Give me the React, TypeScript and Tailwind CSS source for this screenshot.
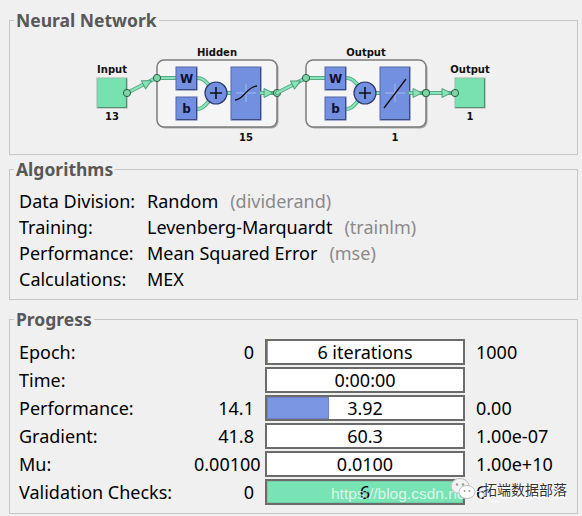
import React from "react";

function Wire({ d }: { d: string }) {
  return (
    <g>
      <path d={d} fill="none" stroke="#5aa884" strokeWidth={4} strokeLinecap="round" />
      <path d={d} fill="none" stroke="#86e4b8" strokeWidth={2.2} strokeLinecap="round" />
    </g>
  );
}

function Dot({ x, y }: { x: number; y: number }) {
  return <circle cx={x} cy={y} r={3.6} fill="#7dd6a8" stroke="#2f5c45" strokeWidth={1} />;
}

function Head({ x, y, a }: { x: number; y: number; a: number }) {
  return (
    <polygon
      points="0,0 -9,-4.5 -9,4.5"
      transform={`translate(${x} ${y}) rotate(${a})`}
      fill="#86e4b8"
      stroke="#4e9c78"
      strokeWidth={1}
      strokeLinejoin="round"
    />
  );
}

function BlueBox({ x, y, w, h }: { x: number; y: number; w: number; h: number }) {
  return (
    <g>
      <rect x={x} y={y} width={w} height={h} fill="#7390e0" stroke="#5467a8" strokeWidth={1} />
      <path d={`M ${x + 1} ${y + h - 0.5} L ${x + w - 0.5} ${y + h - 0.5} L ${x + w - 0.5} ${y + 1}`} fill="none" stroke="#3b4a80" strokeWidth={1} />
    </g>
  );
}

const svgText = "font-['DejaVu_Sans',sans-serif] font-bold text-[10px] fill-[#111]";

function Layer({ x0, label, count, kind }: { x0: number; label: string; count: string; kind: "sig" | "lin" }) {
  return (
    <g>
      <text x={x0 + 60} y={56} textAnchor="middle" className={svgText}>
        {label}
      </text>
      <rect x={x0 + 1.5} y={61.5} width={120} height={67} rx={7} fill="#a9a9a9" />
      <rect x={x0} y={60} width={120} height={67} rx={7} fill="#f5f5f5" stroke="#7c7c7c" strokeWidth={1.5} />
      <Wire d={`M ${x0} 78 L ${x0 + 19} 78`} />
      <Wire d={`M ${x0 + 40} 78 C ${x0 + 46} 78 ${x0 + 48} 81 ${x0 + 53} 86`} />
      <Wire d={`M ${x0 + 40} 109 C ${x0 + 46} 109 ${x0 + 48} 105 ${x0 + 53} 100`} />
      <Wire d={`M ${x0 + 69} 93 L ${x0 + 75} 93`} />
      <BlueBox x={x0 + 19} y={67} w={21} h={23} />
      <text x={x0 + 29.5} y={83} textAnchor="middle" className="font-['DejaVu_Sans',sans-serif] font-bold text-[12px] fill-[#101030]">
        W
      </text>
      <BlueBox x={x0 + 19} y={97} w={21} h={23} />
      <text x={x0 + 29.5} y={113} textAnchor="middle" className="font-['DejaVu_Sans',sans-serif] font-bold text-[12px] fill-[#101030]">
        b
      </text>
      <circle cx={x0 + 59} cy={93} r={11} fill="#7390e0" stroke="#2c3868" strokeWidth={1.2} />
      <path d={`M ${x0 + 53} 93 L ${x0 + 65} 93 M ${x0 + 59} 87 L ${x0 + 59} 99`} stroke="#111" strokeWidth={1.6} />
      <BlueBox x={x0 + 74} y={67} w={30} h={53} />
      <path d={`M ${x0 + 89} 84 L ${x0 + 89} 102 M ${x0 + 79} 93 L ${x0 + 99} 93`} stroke="#a9bcf2" strokeWidth={1} />
      {kind === "sig" ? (
        <path d={`M ${x0 + 78} 100 C ${x0 + 87} 100 ${x0 + 90} 86 ${x0 + 100} 86`} fill="none" stroke="#111" strokeWidth={1.3} />
      ) : (
        <path d={`M ${x0 + 78} 108 L ${x0 + 100} 79`} fill="none" stroke="#111" strokeWidth={1.3} />
      )}
      <Wire d={`M ${x0 + 104} 93 L ${x0 + 118} 93`} />
      <Head x={x0 + 116} y={93} a={0} />
      <Dot x={x0} y={78} />
      <Dot x={x0 + 120} y={93} />
      <text x={x0 + 89} y={141} textAnchor="middle" className={svgText}>
        {count}
      </text>
    </g>
  );
}

function Square({ x, label, count }: { x: number; label: string; count: string }) {
  return (
    <g>
      <text x={x + 15} y={73} textAnchor="middle" className={svgText}>
        {label}
      </text>
      <rect x={x} y={78} width={30} height={30} fill="#77e2b0" stroke="#9ab8aa" strokeWidth={1} />
      <path d={`M ${x + 0.5} 107.5 L ${x + 29.5} 107.5 L ${x + 29.5} 78.5`} fill="none" stroke="#5f8a76" strokeWidth={1.2} />
      <text x={x + 15} y={120} textAnchor="middle" className={svgText}>
        {count}
      </text>
    </g>
  );
}

function Diagram() {
  return (
    <svg className="block ml-[80px] mt-[10px]" width={400} height={105} viewBox="90 40 400 105">
      <Square x={97} label="Input" count="13" />
      <Wire d="M 127 93 L 156 78" />
      <Head x={151.5} y={80.8} a={-26.6} />
      <Dot x={127} y={93} />
      <Layer x0={157} label="Hidden" count="15" kind="sig" />
      <Wire d="M 277 93 L 306 78" />
      <Head x={300.5} y={80.9} a={-27.3} />
      <Layer x0={306} label="Output" count="1" kind="lin" />
      <Wire d="M 426 93 L 455 93" />
      <Head x={451} y={93} a={0} />
      <Square x={455} label="Output" count="1" />
      <Dot x={426} y={93} />
      <Dot x={455} y={93} />
    </svg>
  );
}

function Legend({ children }: { children: React.ReactNode }) {
  return (
    <legend className="ml-[4px] px-[2px] h-[20px] leading-[20px] text-[17.5px] font-bold text-[#585858]">{children}</legend>
  );
}

function Bar({ text, frac, color, edge }: { text: string; frac: number; color: string; edge: string }) {
  const big = frac > 0.05;
  return (
    <div className="grid w-[200px] h-[26px] border-2 border-[#6b6b6b] bg-white">
      <div className="col-start-1 row-start-1 h-full flex">
        <div
          className="h-full"
          style={{
            width: big ? `${frac * 100}%` : frac > 0 ? "1px" : "0px",
            backgroundColor: color,
            border: big ? `1px solid ${edge}` : "none",
          }}
        />
      </div>
      <div className="col-start-1 row-start-1 flex items-center justify-center leading-none">{text}</div>
    </div>
  );
}

const progressRows = [
  { label: "Epoch:", val: "0", text: "6 iterations", frac: 0.006, color: "#7b96e3", edge: "#6a84d0", right: "1000" },
  { label: "Time:", val: "", text: "0:00:00", frac: 0, color: "#ffffff", edge: "#ffffff", right: "" },
  { label: "Performance:", val: "14.1", text: "3.92", frac: 0.318, color: "#7b96e3", edge: "#6a84d0", right: "0.00" },
  { label: "Gradient:", val: "41.8", text: "60.3", frac: 0, color: "#ffffff", edge: "#ffffff", right: "1.00e-07" },
  { label: "Mu:", val: "0.00100", text: "0.0100", frac: 0, color: "#ffffff", edge: "#ffffff", right: "1.00e+10" },
  { label: "Validation Checks:", val: "0", text: "6", frac: 1, color: "#78e3b4", edge: "#6fcfa5", right: "6" },
];

export default function App() {
  return (
    <div className="relative w-[582px] h-[516px] overflow-hidden bg-[#f0f0f0] pl-[9px] pr-[4px] pt-[10px] font-['Noto_Sans',sans-serif] text-black">
      <fieldset className="border border-[#c6c6c6] pb-[9px]">
        <Legend>Neural Network</Legend>
        <Diagram />
      </fieldset>

      <fieldset className="mt-[4px] border border-[#c6c6c6] text-[18px]">
        <Legend>Algorithms</Legend>
        <div className="grid grid-cols-[128px_1fr] leading-[26px] pl-[9px] pt-[9px] pb-[7px]">
          <div>Data Division:</div>
          <div>
            Random<span className="ml-[12px] text-[#8a8a8a]">(dividerand)</span>
          </div>
          <div>Training:</div>
          <div>
            Levenberg-Marquardt<span className="ml-[12px] text-[#8a8a8a]">(trainlm)</span>
          </div>
          <div>Performance:</div>
          <div>
            Mean Squared Error<span className="ml-[12px] text-[#8a8a8a]">(mse)</span>
          </div>
          <div>Calculations:</div>
          <div>MEX</div>
        </div>
      </fieldset>

      <fieldset className="mt-[9px] border border-[#c6c6c6] text-[18px]">
        <Legend>Progress</Legend>
        <div className="flex flex-col pl-[9px] pt-[9px] pb-[7px]">
          {progressRows.map((r) => (
            <div key={r.label} className="flex items-center h-[28px]">
              <div className="w-[175px]">{r.label}</div>
              <div className="w-[60px] text-right">{r.val}</div>
              <div className="ml-[11px]">
                <Bar text={r.text} frac={r.frac} color={r.color} edge={r.edge} />
              </div>
              <div className="ml-[11px]">{r.right}</div>
            </div>
          ))}
        </div>
      </fieldset>

      <div className="absolute left-[331px] top-[484px] text-[15.5px] leading-[20px] font-['Liberation_Sans',sans-serif] text-white/75 whitespace-nowrap">
        https://blog.csdn.net/qq_19600291
      </div>
      <div className="absolute left-[449px] top-[477px] flex items-center gap-[6px]">
        <svg width={28} height={24} viewBox="0 0 28 24">
          <ellipse cx={11} cy={9} rx={9} ry={7.5} fill="#f2f2f2" stroke="#bdbdbd" strokeWidth={1} />
          <ellipse cx={18} cy={15} rx={8} ry={6.5} fill="#ffffff" stroke="#bdbdbd" strokeWidth={1} />
          <circle cx={8} cy={7.5} r={1.2} fill="#9a9a9a" />
          <circle cx={14} cy={7.5} r={1.2} fill="#9a9a9a" />
          <circle cx={15.5} cy={14} r={1} fill="#9a9a9a" />
          <circle cx={20.5} cy={14} r={1} fill="#9a9a9a" />
        </svg>
        <div className="text-[14px] leading-[20px] text-[#333] font-['Noto_Sans_CJK_SC',sans-serif] [text-shadow:0_0_2px_#fff,0_0_2px_#fff,0_0_3px_#fff]">
          拓端数据部落
        </div>
      </div>
    </div>
  );
}
